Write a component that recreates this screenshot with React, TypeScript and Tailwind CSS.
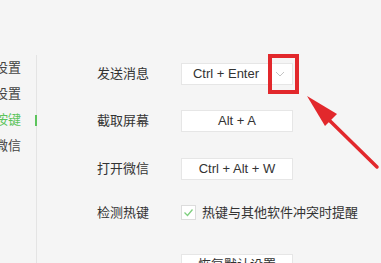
import React from "react";

const sideItems = [
  { label: "通用设置", active: false },
  { label: "账号设置", active: false },
  { label: "快捷按键", active: true },
  { label: "关于微信", active: false },
];

const KeyBox = ({ children }: { children: React.ReactNode }) => (
  <div className="flex h-[22px] w-[112px] items-center justify-center border border-[#e6e6e6] bg-white text-[13px] text-[#333]">
    {children}
  </div>
);

const App = () => {
  return (
    <div className="relative flex h-[263px] w-[381px] overflow-hidden bg-[#f5f5f5] font-['Liberation_Sans','Noto_Sans_CJK_SC',sans-serif] text-[13px] text-[#333]">
      {/* sidebar */}
      <div className="mt-[55px] flex w-[37px] shrink-0 flex-col border-r border-[#e4e4e4]">
        {sideItems.map((item) => (
          <div
            key={item.label}
            className="relative flex h-[26px] items-center justify-end pr-[15px]"
          >
            <span
              className={`shrink-0 whitespace-nowrap ${item.active ? "text-[#5cc45c]" : "text-[#444]"}`}
            >
              {item.label}
            </span>
            {item.active && (
              <div className="absolute right-[-1px] top-[8px] h-[11px] w-[2px] bg-[#5cc45c]"></div>
            )}
          </div>
        ))}
      </div>

      {/* settings */}
      <div className="flex flex-col pl-[60px] pt-[63px]">
        <div className="flex h-[22px] items-center">
          <div className="w-[84px]">发送消息</div>
          <div className="relative flex h-[22px] w-[112px] items-center border border-[#e6e6e6] bg-white">
            <span className="flex-1 pl-[1px] text-center">Ctrl + Enter</span>
            <svg width="22" height="20" viewBox="0 0 22 20" className="mr-[1px]">
              <polyline points="7,8 11,12 15,8" fill="none" stroke="#c4c4c4" strokeWidth="1" />
            </svg>
            <div className="absolute left-[86px] top-[-10px] h-[40px] w-[31px] border-4 border-[#e2282c]"></div>
          </div>
        </div>

        <div className="mt-[25px] flex h-[22px] items-center">
          <div className="w-[84px]">截取屏幕</div>
          <KeyBox>Alt + A</KeyBox>
        </div>

        <div className="mt-[26px] flex h-[22px] items-center">
          <div className="w-[84px]">打开微信</div>
          <KeyBox>Ctrl + Alt + W</KeyBox>
        </div>

        <div className="mt-[23px] flex h-[22px] items-center">
          <div className="w-[84px]">检测热键</div>
          <div className="flex items-center gap-[6px]">
            <div className="flex h-[15px] w-[15px] items-center justify-center border border-[#dcdcdc] bg-white">
              <svg width="11" height="9" viewBox="0 0 11 9">
                <polyline points="1.5,4.5 4.5,7.5 9.5,1.5" fill="none" stroke="#7fcf7f" strokeWidth="1.3" />
              </svg>
            </div>
            <span className="whitespace-nowrap">热键与其他软件冲突时提醒</span>
          </div>
        </div>

        <div className="mt-[31px] flex h-[22px] items-center pl-[84px]">
          <KeyBox>恢复默认设置</KeyBox>
        </div>
      </div>

      {/* annotation arrow */}
      <svg
        className="pointer-events-none absolute left-0 top-0"
        width="381"
        height="263"
        viewBox="0 0 381 263"
      >
        <line x1="377" y1="167" x2="326" y2="117" stroke="#e2282c" strokeWidth="3.5" strokeLinecap="round" />
        <polygon points="307,96 337,114 325,126" fill="#e2282c" />
      </svg>
    </div>
  );
};

export default App;
